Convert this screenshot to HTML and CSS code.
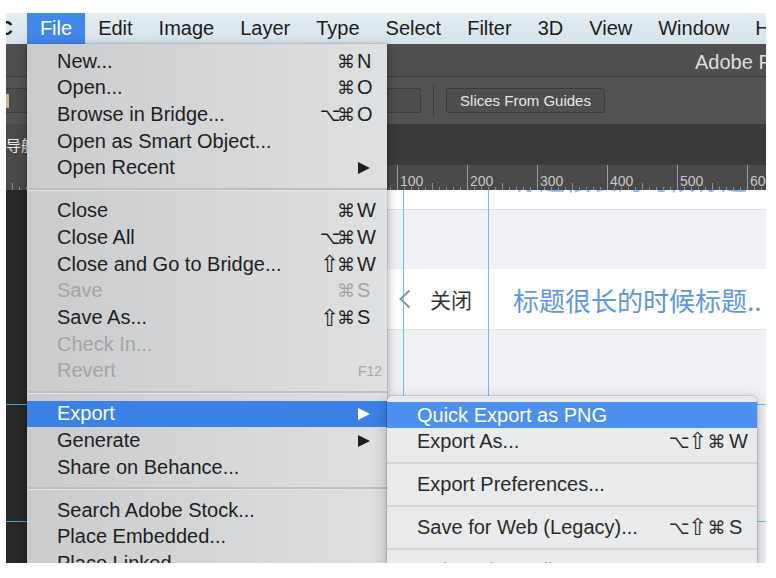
FILE: index.html
```html
<!DOCTYPE html>
<html>
<head>
<meta charset="utf-8">
<title>Photoshop File Menu</title>
<link rel="stylesheet" href="styles.css">
</head>
<body>
<div class="frame">
  <div class="menubar">
    <span class="app">CC</span>
    <span class="mi active">File</span>
    <span class="mi">Edit</span>
    <span class="mi">Image</span>
    <span class="mi">Layer</span>
    <span class="mi">Type</span>
    <span class="mi">Select</span>
    <span class="mi">Filter</span>
    <span class="mi">3D</span>
    <span class="mi">View</span>
    <span class="mi">Window</span>
    <span class="mi">Help</span>
  </div>
  <div class="titlebar">Adobe Photoshop CC 2018</div>
  <div class="options">
    <div class="field f1"><span class="chip"></span></div>
    <div class="field f2"></div>
    <div class="vsep"></div>
    <div class="btn">Slices From Guides</div>
  </div>
  <div class="tabbar"><div class="tab">导航</div></div>
  <div class="ruler">
    <span class="rl">100</span><span class="rl">200</span><span class="rl">300</span><span class="rl">400</span><span class="rl">500</span><span class="rl">600</span>
  </div>
  <div class="canvas">
    <div class="pasteboard"></div>
    <div class="doc">
      <div class="row top"><span class="title">标题很长的时候标题..</span></div>
      <div class="band"></div>
      <div class="row nav">
        <svg class="chev" width="13" height="20" viewBox="0 0 13 20"><polyline points="11.5,1.5 2.5,10 11.5,18.5" fill="none" stroke="#939393" stroke-width="2"/></svg>
        <span class="close-txt">关闭</span>
        <span class="title">标题很长的时候标题..</span>
      </div>
    </div>
  </div>

  <div class="guide v g1"></div>
  <div class="guide v g2"></div>
  <div class="guide h g3"></div>
  <div class="guide h g4"></div>

  <div class="dropdown">
    <div class="item">New...<span class="sc"><span class="mod">⌘</span><span class="key">N</span></span></div>
    <div class="item">Open...<span class="sc"><span class="mod">⌘</span><span class="key">O</span></span></div>
    <div class="item">Browse in Bridge...<span class="sc"><span class="mod">⌥</span><span class="mod">⌘</span><span class="key">O</span></span></div>
    <div class="item">Open as Smart Object...</div>
    <div class="item">Open Recent<svg class="arrow" width="12" height="12" viewBox="0 0 12 12"><polygon points="0,0 12,6 0,12" fill="#1e1e1e"/></svg></div>
    <div class="sep"></div>
    <div class="item">Close<span class="sc"><span class="mod">⌘</span><span class="key">W</span></span></div>
    <div class="item">Close All<span class="sc"><span class="mod">⌥</span><span class="mod">⌘</span><span class="key">W</span></span></div>
    <div class="item">Close and Go to Bridge...<span class="sc"><span class="mod shift">⇧</span><span class="mod">⌘</span><span class="key">W</span></span></div>
    <div class="item dis">Save<span class="sc"><span class="mod">⌘</span><span class="key">S</span></span></div>
    <div class="item">Save As...<span class="sc"><span class="mod shift">⇧</span><span class="mod">⌘</span><span class="key">S</span></span></div>
    <div class="item dis">Check In...</div>
    <div class="item dis">Revert<span class="sc f12">F12</span></div>
    <div class="sep"></div>
    <div class="item hl">Export<svg class="arrow" width="12" height="12" viewBox="0 0 12 12"><polygon points="0,0 12,6 0,12" fill="#ffffff"/></svg></div>
    <div class="item">Generate<svg class="arrow" width="12" height="12" viewBox="0 0 12 12"><polygon points="0,0 12,6 0,12" fill="#1e1e1e"/></svg></div>
    <div class="item">Share on Behance...</div>
    <div class="sep"></div>
    <div class="item">Search Adobe Stock...</div>
    <div class="item">Place Embedded...</div>
    <div class="item">Place Linked...</div>
    <div class="item">Package...</div>
  </div>

  <div class="submenu">
    <div class="item hl">Quick Export as PNG</div>
    <div class="item">Export As...<span class="sc"><span class="mod">⌥</span><span class="mod shift">⇧</span><span class="mod">⌘</span><span class="key">W</span></span></div>
    <div class="sep"></div>
    <div class="item">Export Preferences...</div>
    <div class="sep"></div>
    <div class="item">Save for Web (Legacy)...<span class="sc"><span class="mod">⌥</span><span class="mod shift">⇧</span><span class="mod">⌘</span><span class="key">S</span></span></div>
    <div class="sep"></div>
    <div class="item dis">Artboards to Files...</div>
  </div>
</div>
</body>
</html>
```

FILE: styles.css
```css
* { box-sizing: border-box; }
html, body { margin: 0; padding: 0; background: #ffffff; }
body { font-family: "Liberation Sans", Arial, sans-serif; }

.frame {
  position: relative;
  margin: 13px 0 0 6px;
  width: 760px;
  height: 550px;
  overflow: hidden;
  background: #282828;
  display: flex;
  flex-direction: column;
}

/* top macOS menu bar */
.menubar {
  display: flex;
  flex: 0 0 31px;
  height: 31px;
  line-height: 31px;
  font-size: 20px;
  color: #1c1c1c;
  background: linear-gradient(#e3edf2, #d6e3ea);
  white-space: nowrap;
}
.menubar .app { font-weight: bold; margin-left: -22px; margin-right: 14px; }
.menubar .mi { padding: 0 13px; }
.menubar .mi.active { background: #3f87e9; color: #ffffff; }

/* photoshop chrome */
.titlebar {
  flex: 0 0 33px;
  height: 33px;
  background: #4f4f4f;
  border-bottom: 1px solid #383838;
  display: flex;
  align-items: center;
  padding: 4px 0 0 689px;
  color: #dedede;
  font-size: 20px;
  white-space: nowrap;
}
.options {
  flex: 0 0 47px;
  height: 47px;
  background: #535353;
  display: flex;
  align-items: center;
}
.field {
  height: 25px;
  border: 1px solid #3c3c3c;
  background: #4d4d4d;
  border-radius: 2px;
  display: flex;
  align-items: center;
  flex: none;
}
.field.f1 { width: 240px; margin-left: -4px; }
.field.f2 { width: 61px; margin-left: 118px; }
.chip { width: 3px; height: 14px; margin-left: 3px; background: #d2b586; }
.vsep { width: 1px; height: 32px; background: #3c3c3c; margin-left: 12px; flex: none; }
.btn {
  margin-left: 12px;
  width: 159px;
  height: 25px;
  border: 1px solid #3a3a3a;
  border-radius: 3px;
  background: #4e4e4e;
  color: #e6e6e6;
  font-size: 15px;
  display: flex;
  align-items: center;
  justify-content: center;
  flex: none;
}
.tabbar {
  flex: 0 0 41px;
  height: 41px;
  background: #3a3a3a;
  display: flex;
}
.tab {
  width: 200px;
  background: #4a4a4a;
  color: #e8e8e8;
  font-family: "Noto Sans CJK SC", sans-serif;
  font-size: 15px;
  display: flex;
  align-items: center;
}
.ruler {
  flex: 0 0 25px;
  height: 25px;
  display: flex;
  align-items: flex-end;
  padding-left: 391px;
  white-space: nowrap;
  background-color: #494949;
  background-image:
    linear-gradient(to right, #9c9c9c 1px, transparent 1px),
    linear-gradient(to right, #8e8e8e 1px, transparent 1px),
    linear-gradient(to right, #8e8e8e 1px, transparent 1px);
  background-size: 70px 100%, 35px 7px, 7px 3px;
  background-position: 41px 0, 6px 100%, 6px 100%;
  background-repeat: repeat-x;
}
.rl {
  flex: none;
  width: 70px;
  font-size: 14px;
  line-height: 14px;
  color: #c8c8c8;
  padding: 0 0 2px 3px;
}

/* canvas */
.canvas {
  flex: 1;
  min-height: 0;
  display: flex;
}
.pasteboard { width: 21px; flex: none; background: #282828; }
.doc {
  flex: 1;
  background: #f0f1f5;
  overflow: hidden;
}
.row {
  height: 61px;
  background: #ffffff;
  display: flex;
  align-items: center;
  white-space: nowrap;
  font-family: "Noto Sans CJK SC", sans-serif;
}
.row.top {
  margin-top: -41px;
  padding-bottom: 2px;
  padding-left: 486px;
  border-bottom: 1px solid #dcdde1;
}
.row.top .title { opacity: 0.7; }
.band { height: 59px; }
.row.nav {
  padding-left: 371px;
  border-bottom: 1px solid #e0e1e5;
}
.chev { flex: none; display: block; }
.close-txt { margin-left: 19px; font-size: 21px; color: #333333; }
.title { font-size: 26px; color: #5c96e8; }
.row.nav .title { margin-left: 41px; }

/* guides */
.guide { position: absolute; background: rgba(70, 190, 240, 0.85); z-index: 2; }
.guide.v { top: 177px; bottom: 0; width: 1px; }
.guide.h { left: 0; right: 0; height: 1px; }
.g1 { left: 397px; }
.g2 { left: 482px; }
.g3 { top: 391px; }
.g4 { top: 508px; }

/* dropdown menus */
.dropdown {
  position: absolute;
  left: 21px;
  top: 31px;
  width: 360px;
  padding-top: 4px;
  background: linear-gradient(to right, #c9cbcc, #dfe0e1);
  box-shadow: 0 3px 10px rgba(0, 0, 0, 0.35), 0 0 0 1px rgba(0, 0, 0, 0.08);
  z-index: 5;
}
.item {
  display: flex;
  align-items: center;
  height: 26.667px;
  padding: 0 10px 0 30px;
  font-size: 20px;
  color: #1e1e1e;
  white-space: nowrap;
}
.item.dis { color: #a2a4a5; }
.dropdown .item.hl { background: #3b82e6; color: #ffffff; }
.sep {
  height: 16.333px;
  display: flex;
  align-items: center;
}
.sep::before {
  content: "";
  flex: 1;
  height: 3px;
  background: linear-gradient(#bcbebf 0, #bcbebf 2px, #e3e4e5 2px);
}
.sc { margin-left: auto; display: flex; align-items: center; }
.mod {
  font-family: "DejaVu Sans", sans-serif;
  font-size: 18px;
  width: 17px;
  text-align: center;
}
.mod.shift { font-size: 23px; line-height: 20px; }
.key { width: 20px; margin-left: 3px; }
.f12 { font-size: 14px; margin-right: -5px; }
.arrow { margin-left: auto; margin-right: 7px; display: block; flex: none; }

.submenu {
  position: absolute;
  left: 381px;
  top: 383px;
  width: 370px;
  padding-top: 6px;
  background: #e9eaeb;
  border-radius: 5px 5px 0 0;
  box-shadow: 0 0 0 1px rgba(0, 0, 0, 0.1), 0 4px 14px rgba(0, 0, 0, 0.3);
  z-index: 6;
}
.submenu .item { height: 26px; padding-right: 8px; color: #2a2a2a; }
.submenu .item.dis { color: #a5a6a7; }
.submenu .item.hl { background: #4d90f0; color: #ffffff; }
.submenu .sep { height: 17px; }
.submenu .sep::before { height: 2px; background: #d3d4d5; }
.submenu .mod { width: 19px; }
```
